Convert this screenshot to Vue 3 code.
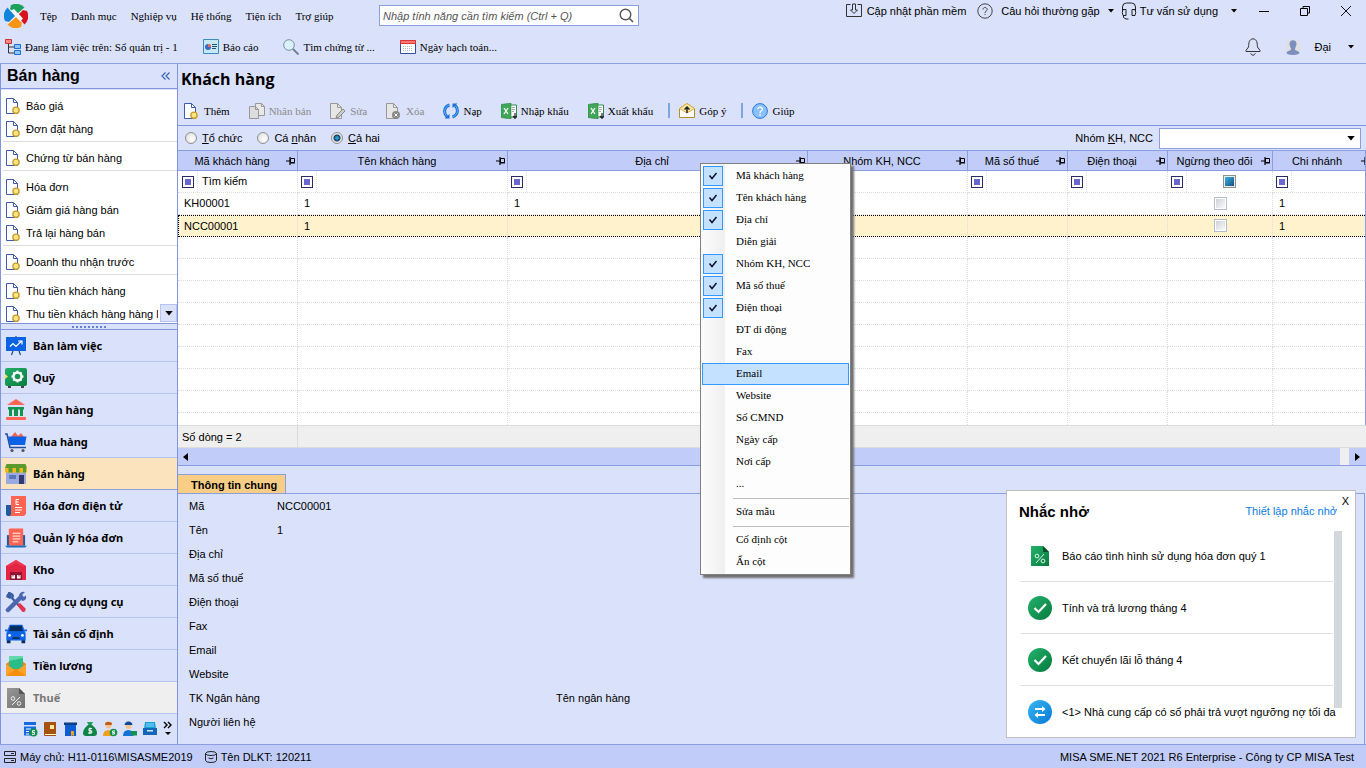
<script setup>
import { ref } from 'vue'

const menus = ['Tệp', 'Danh mục', 'Nghiệp vụ', 'Hệ thống', 'Tiện ích', 'Trợ giúp']
const shortcuts = [
  { icon: 'tree', label: 'Đang làm việc trên: Sổ quản trị - 1' },
  { icon: 'report', label: 'Báo cáo' },
  { icon: 'lens', label: 'Tìm chứng từ ...' },
  { icon: 'calendar', label: 'Ngày hạch toán...' }
]
const groups = [
  ['Báo giá', 'Đơn đặt hàng'],
  ['Chứng từ bán hàng'],
  ['Hóa đơn', 'Giảm giá hàng bán', 'Trả lại hàng bán'],
  ['Doanh thu nhận trước'],
  ['Thu tiền khách hàng', 'Thu tiền khách hàng hàng loạt']
]
const modules = [
  { icon: 'board', label: 'Bàn làm việc' },
  { icon: 'safe', label: 'Quỹ' },
  { icon: 'bank', label: 'Ngân hàng' },
  { icon: 'cart', label: 'Mua hàng' },
  { icon: 'shop', label: 'Bán hàng', state: 'active' },
  { icon: 'einvoice', label: 'Hóa đơn điện tử' },
  { icon: 'laptop', label: 'Quản lý hóa đơn' },
  { icon: 'barn', label: 'Kho' },
  { icon: 'tools', label: 'Công cụ dụng cụ' },
  { icon: 'car', label: 'Tài sản cố định' },
  { icon: 'wages', label: 'Tiền lương' },
  { icon: 'tax', label: 'Thuế', state: 'muted' }
]
const minis = [
  { icon: 'm-calc', label: 'Giá thành' },
  { icon: 'm-book', label: 'Tổng hợp' },
  { icon: 'm-contract', label: 'Hợp đồng' },
  { icon: 'm-bag', label: 'Ngân sách' },
  { icon: 'm-customer', label: 'Khách hàng' },
  { icon: 'm-staff', label: 'Nhân viên' },
  { icon: 'm-drawer', label: 'Tài liệu' }
]
const actions = [
  { icon: 'newdoc', label: 'Thêm' },
  { icon: 'copydoc', label: 'Nhân bản', off: true },
  { icon: 'editdoc', label: 'Sửa', off: true },
  { icon: 'deldoc', label: 'Xóa', off: true },
  { icon: 'reload', label: 'Nạp' },
  { icon: 'excel', label: 'Nhập khẩu' },
  { icon: 'excel', label: 'Xuất khẩu' },
  { icon: 'feedback', label: 'Góp ý', sep: true },
  { icon: 'help', label: 'Giúp', sep: true }
]
const kind = ref('all')
const kinds = [
  { id: 'org', pre: '', key: 'T', post: 'ổ chức' },
  { id: 'person', pre: 'Cá ', key: 'n', post: 'hân' },
  { id: 'all', pre: '', key: 'C', post: 'ả hai' }
]
const columns = [
  { label: 'Mã khách hàng', cls: 'c-code' },
  { label: 'Tên khách hàng', cls: 'c-name' },
  { label: 'Địa chỉ', cls: 'c-addr' },
  { label: 'Nhóm KH, NCC', cls: 'c-group' },
  { label: 'Mã số thuế', cls: 'c-tax' },
  { label: 'Điện thoại', cls: 'c-phone' },
  { label: 'Ngừng theo dõi', cls: 'c-stop' },
  { label: 'Chi nhánh', cls: 'c-branch' }
]
const rows = [
  ['KH00001', '1', '1', '', '', '', null, '1'],
  ['NCC00001', '1', '', '', '', '', null, '1']
]
const fields = [
  { label: 'Mã', value: 'NCC00001' },
  { label: 'Tên', value: '1' },
  { label: 'Địa chỉ' },
  { label: 'Mã số thuế' },
  { label: 'Điện thoại' },
  { label: 'Fax' },
  { label: 'Email' },
  { label: 'Website' },
  { label: 'TK Ngân hàng', second: 'Tên ngân hàng' },
  { label: 'Người liên hệ' }
]
const columnMenu = [
  { label: 'Mã khách hàng', on: true },
  { label: 'Tên khách hàng', on: true },
  { label: 'Địa chỉ', on: true },
  { label: 'Diễn giải' },
  { label: 'Nhóm KH, NCC', on: true },
  { label: 'Mã số thuế', on: true },
  { label: 'Điện thoại', on: true },
  { label: 'ĐT di động' },
  { label: 'Fax' },
  { label: 'Email', hover: true },
  { label: 'Website' },
  { label: 'Số CMND' },
  { label: 'Ngày cấp' },
  { label: 'Nơi cấp' },
  { label: '...' },
  { label: 'Sửa mẫu', sep: true },
  { label: 'Cố định cột', sep: true },
  { label: 'Ẩn cột' }
]
const reminders = [
  { icon: 'r-report', label: 'Báo cáo tình hình sử dụng hóa đơn quý 1' },
  { icon: 'r-check', label: 'Tính và trả lương tháng 4' },
  { icon: 'r-check', label: 'Kết chuyển lãi lỗ tháng 4' },
  { icon: 'r-swap', label: '<1> Nhà cung cấp có số phải trả vượt ngưỡng nợ tối đa' }
]
</script>

<template>
  <div class="app">
    <svg class="sprite" aria-hidden="true">
      <defs>
        <linearGradient id="g-green" x1="0" y1="0" x2="1" y2="1"><stop offset="0" stop-color="#23b26b" /><stop offset="1" stop-color="#087a3e" /></linearGradient>
        <linearGradient id="g-blue" x1="0" y1="0" x2="1" y2="1"><stop offset="0" stop-color="#35b8f2" /><stop offset="1" stop-color="#0a78d6" /></linearGradient>
        <linearGradient id="g-gray" x1="0" y1="0" x2="1" y2="1"><stop offset="0" stop-color="#989898" /><stop offset="1" stop-color="#707070" /></linearGradient>
      </defs>
      <symbol id="logo" viewBox="0 0 24 24">
        <circle cx="12" cy="12" r="10.500" fill="#f4f7ff" />
        <path d="M7 1A12 12 0 0 1 20.500 3.500L12 11 6 5z" fill="#1ba15c" />
        <path d="M7 1A12 12 0 0 1 20.500 3.500L12 11 6 5z" fill="#d9121c" transform="rotate(90 12 12)" />
        <path d="M7 1A12 12 0 0 1 20.500 3.500L12 11 6 5z" fill="#fb9314" transform="rotate(180 12 12)" />
        <path d="M7 1A12 12 0 0 1 20.500 3.500L12 11 6 5z" fill="#0f86dc" transform="rotate(270 12 12)" />
        <path d="m7 6.500 3-1.500 9 9.500-2.500 3z" fill="#f4f7ff" />
      </symbol>
      <symbol id="tree" viewBox="0 0 16 16"><path d="M3.500 5v9H9M3.500 8H9" fill="none" stroke="#333" /><path d="M.5.500h6v4h-6z" fill="#f88" stroke="#c33" /><path d="M9.500 5.500h6v4h-6zM9.500 11.500h6v4h-6z" fill="#8cc6ff" stroke="#1b6fd0" /></symbol>
      <symbol id="report" viewBox="0 0 16 16"><path d="M.5.500h15v14H.5z" fill="#c6e8fb" stroke="#3d8bb8" /><circle cx="5" cy="8" r="3" fill="#3a69c4" /><path d="M5 8V5a3 3 0 0 1 3 3z" fill="#e66" /><path d="M9 5.500h5M9 7.500h5M9 9.500h4" stroke="#256" /></symbol>
      <symbol id="lens" viewBox="0 0 16 16"><circle cx="6" cy="6" r="5.300" fill="#d8f3fd" stroke="#7c8fa0" /><path d="m10 10 5.500 5.500" stroke="#6c7d92" stroke-width="1.800" /></symbol>
      <symbol id="calendar" viewBox="0 0 16 14"><path d="M.5.500h15v13H.5z" fill="#fff" stroke="#2f4f9e" /><path d="M.5.500h15v3H.5z" fill="#f77" stroke="#d33" /><path d="M3 6.500h10M3 8.500h10M3 10.500h10" stroke="#b4bcc4" stroke-dasharray="1 1" /></symbol>
      <symbol id="glass" viewBox="0 0 15 15"><circle cx="6.500" cy="6.500" r="5.300" fill="none" stroke="#555" stroke-width="1.400" /><path d="m10.500 10.500 3.500 3.500" stroke="#555" stroke-width="1.600" /></symbol>
      <symbol id="update" viewBox="0 0 16 16"><path d="M4.500 1.500h-4v12h15v-12h-4" fill="none" stroke="#333" /><path d="M6.500 1v6h-2L8 10.500 11.500 7h-2V1z" fill="none" stroke="#333" /></symbol>
      <symbol id="question" viewBox="0 0 16 16"><circle cx="8" cy="8" r="7.200" fill="none" stroke="#444" /><path d="M6 6.500c0-2.800 4.200-2.500 4.200 0C10.200 8 8 8 8 10" fill="none" stroke="#444" /><path d="M7.500 11h1v1h-1z" fill="#444" /></symbol>
      <symbol id="headset" viewBox="0 0 16 18"><path d="M1.500 9V5q0-4 4-4h5q4 0 4 4v4M2 7.500h3v6H2q-1.500-3 0-6zM11 7.500h3q1.500 3 0 6h-3zM2.500 14v1.500L5 17h2.500" fill="none" stroke="#222" /></symbol>
      <symbol id="caret" viewBox="0 0 6 4"><path d="M0 0h6L3 3.500z" fill="#000" /></symbol>
      <symbol id="win-min" viewBox="0 0 12 12"><path d="M1 6.500h10" stroke="#000" /></symbol>
      <symbol id="win-max" viewBox="0 0 12 12"><path d="M1.500 3.500h7v7h-7zM4 3.500v-2h6.500V8H9" fill="none" stroke="#000" /></symbol>
      <symbol id="win-close" viewBox="0 0 12 12"><path d="m1 1 10 10M11 1 1 11" stroke="#111" /></symbol>
      <symbol id="bell" viewBox="0 0 16 18"><path d="M8 .8C3.500 1.500 4 5 3.500 9L1 12.500v1h14v-1L12.500 9C12 5 12.500 1.500 8 .8zM5.500 15.500 8 17.500l2.500-2" fill="none" stroke="#333" /></symbol>
      <symbol id="avatar" viewBox="0 0 16 16"><circle cx="8" cy="8" r="8" fill="#dfe0e4" /><path d="M4.500 4.500c0-4.500 7-4.500 7 0 0 2.500-1.200 3.500-1.500 5.500 0 2 4.500 1.500 4.500 4.500Q8 17.500 1.500 14.500c0-3 4.500-2.500 4.500-4.500-.3-2-1.500-3-1.500-5.500z" fill="#7d8fbd" /></symbol>
      <symbol id="newdoc" viewBox="0 0 16 16"><path d="M.5.500h7l4 4v11H.5z" fill="#fff" stroke="#3f5aa8" /><path d="M7.500.500v4h4" fill="none" stroke="#3f5aa8" /><circle cx="10" cy="12.200" r="3.100" fill="#ffe680" stroke="#c89a28" stroke-width="1.300" /></symbol>
      <symbol id="copydoc" viewBox="0 0 16 16"><path d="M6.500.500h6l3 3v9h-9z" fill="#e8e8e8" stroke="#999" /><path d="M.5 3.500h6l3 3v9h-9z" fill="#ddd" stroke="#999" /><path d="M6.500 3.500v3h3M12.500.500v3h3" fill="none" stroke="#999" /></symbol>
      <symbol id="editdoc" viewBox="0 0 16 16"><path d="M.5.500h7l4 4v11H.5z" fill="#e6e6e6" stroke="#999" /><path d="M7.500.500v4h4" fill="none" stroke="#999" /><path d="m6 15 1-3 6-6 2 2-6 6z" fill="#ccc" stroke="#8b8b8b" /></symbol>
      <symbol id="deldoc" viewBox="0 0 16 16"><path d="M.5.500h7l4 4v11H.5z" fill="#e6e6e6" stroke="#999" /><path d="M7.500.500v4h4" fill="none" stroke="#999" /><circle cx="10" cy="12" r="4" fill="#888" /><path d="m8.500 10.500 3 3M11.500 10.500l-3 3" stroke="#fff" /></symbol>
      <symbol id="reload" viewBox="0 0 16 16"><path d="M6.500 2C.5 4 .5 10.500 4 13.500M9.500 14C15.500 12 15.500 5.500 12 2.500" fill="none" stroke="#1b6fd6" stroke-width="3" /><path d="M6.500 2C.5 4 .5 10.500 4 13.500M9.500 14C15.500 12 15.500 5.500 12 2.500" fill="none" stroke="#65b4ff" stroke-width="1" /><path d="M1.500 15.500h5V11zM14.500.500h-5V5z" fill="#1b6fd6" /></symbol>
      <symbol id="excel" viewBox="0 0 16 16"><path d="M8 2h7.500v12H8z" fill="#fff" stroke="#2e8c46" /><path d="M11 4.500h3M11 6.500h3M11 8.500h2" stroke="#aaa" /><path d="M0 1.500 10 0v16L0 14.500z" fill="#3fa757" stroke="#2a7c3e" stroke-width=".6" /><path d="m3 5 4 6M7 5l-4 6" stroke="#fff" stroke-width="1.300" /><path d="M14 10v5M12 13l2 2.300 2-2.300" fill="none" stroke="#222" stroke-width="1.200" /></symbol>
      <symbol id="feedback" viewBox="0 0 16 16"><path d="m.5 5.500 7.500-5 7.500 5v9H.5z" fill="#fff" stroke="#b98a26" /><path d="m.5 5.500 7.500-5 7.500 5L8 10z" fill="#fbe7a0" stroke="#d8b04a" /><path d="M8 10V4.500M5.500 6.500 8 4l2.500 2.500" fill="none" stroke="#222" stroke-width="1.500" /></symbol>
      <symbol id="help" viewBox="0 0 16 16"><circle cx="8" cy="8" r="7.400" fill="#8ac1fb" stroke="#2d77d2" /><path d="M5.800 6.300c0-3 4.600-2.800 4.600 0C10.400 8 8 8 8 10" fill="none" stroke="#fff" stroke-width="1.300" /><path d="M7.300 11.300h1.500v1.500H7.300z" fill="#fff" /></symbol>
      <symbol id="fold" viewBox="0 0 10 8"><path d="M4.500.500 1 4l3.500 3.500M8.500.500 5 4l3.500 3.500" fill="none" stroke="#3d63b5" stroke-width="1.200" /></symbol>
      <symbol id="pin" viewBox="0 0 10 8"><path d="M0 4h4M4 0v8" stroke="#000" fill="none" stroke-width="1.200" /><path d="M4.500 1.500h4v4h-4z" fill="none" stroke="#000" /><path d="M4 6h5" stroke="#000" /></symbol>
      <symbol id="tick" viewBox="0 0 10 10"><path d="m1.500 4.500 2.500 3L8.500 2" fill="none" stroke="#101030" stroke-width="1.500" /></symbol>

      <symbol id="board" viewBox="0 0 22 22"><path d="M8 16 6.500 20M14 16l1.500 4M11 1v2" stroke="#1c4b7c" stroke-width="1.200" /><path d="M1 2h20v14H1z" fill="#0b62e4" /><path d="m5 11.500 3-3 3 3L16.500 6M13 6h4v3.500" fill="none" stroke="#fff" stroke-width="1.200" /></symbol>
      <symbol id="safe" viewBox="0 0 22 22"><path d="M3 18h3v3H3zM16 18h3v3h-3z" fill="#444" /><rect y="1" width="22" height="18" rx="2" fill="url(#g-green)" /><circle cx="12.500" cy="9.500" r="4" fill="none" stroke="#fff" stroke-width="2.400" /><path d="M12.500 3.500v2M12.500 13.500v2M6.500 9.500h2M16.500 9.500h2M8.400 5.400l1.200 1.200M15.400 12.400l1.200 1.200M16.600 5.400l-1.200 1.200M8.400 13.600l1.200-1.200" stroke="#fff" stroke-width="1.800" /><path d="m0 7 3 2.500L0 12z" fill="#f9e547" /></symbol>
      <symbol id="bank" viewBox="0 0 22 22"><path d="m11 0 9 6H2z" fill="#ff6352" /><path d="M3 8h16v2.500h-1V17h-3v-6.500h-2V17H9v-6.500H7V17H4v-6.500H3z" fill="#12944d" /><rect x="1" y="18" width="20" height="3" rx="1" fill="#ff6352" /></symbol>
      <symbol id="cart" viewBox="0 0 22 22"><path d="m6 6 4-5 4 5zM12 6l4-4 3 4z" fill="#f26552" /><path d="M0 3h2l3 13.500h16" fill="none" stroke="#1f4e9d" stroke-width="1.500" /><path d="M3 5.500h18.500L20 14H5z" fill="#0b62e4" /><circle cx="7" cy="19.500" r="1.600" fill="#555" /><circle cx="18" cy="19.500" r="1.600" fill="#555" /></symbol>
      <symbol id="shop" viewBox="0 0 22 22"><path d="M1 8h20v13H1z" fill="#9aa9df" /><path d="M14 12h5v9h-5z" fill="#353a6b" /><path d="M4 12h7v4H4z" fill="#5c74bb" /><path d="M0 5h22v4q-2 2-4 0-2 2-3.500 0-2 2-3.500 0-2 2-4 0-2 2-3.500 0-2 2-3.500 0z" fill="#f6b71c" /><path d="M3.500 4.500h4v5h-4zM11 4.500h3.500v5H11zM18 4.500h3v5h-3z" fill="#5b9b2e" /><path d="M1.500 1h19L22 5H0z" fill="#5b9b2e" /></symbol>
      <symbol id="einvoice" viewBox="0 0 22 22"><path d="M1 10h5v11H3q-2 0-2-2z" fill="#1d5c9e" /><path d="M6 1h15v18l-2 2H4q2 0 2-2z" fill="#ff6352" /><path d="M14 4.500h-3v5h3M11 7h2.500M10 12.500h7M10 15h7M10 17.500h5" fill="none" stroke="#fff" /></symbol>
      <symbol id="laptop" viewBox="0 0 23 22"><path d="M2 8h19v11H2z" fill="#1d5c9e" /><path d="M4 2q0-1 2-1h13v18H6q-2 0-2-2z" fill="#ff6352" /><path d="M8 6h8M8 9h8M8 12h8M8 15h6" stroke="#fff" /><path d="M0 19h23l-2 2H2z" fill="#1672c2" /></symbol>
      <symbol id="barn" viewBox="0 0 22 22"><path d="m11 1 10 6v14H1V7z" fill="#e42644" /><path d="m11 1 10 6-3 .5-7-3.500-7 3.500L1 7z" fill="#f0364f" /><path d="M5 13h12v8H5z" fill="#901230" /><path d="M6.500 16h3.500v3.500H6.500zM12 16h3.500v3.500H12z" fill="#fff" /><path d="M8 15.500v2M14 15.500v2" stroke="#901230" /></symbol>
      <symbol id="tools" viewBox="0 0 22 22"><path d="M3 2q4 0 5 3l-1 2 11 12" fill="none" stroke="#3a5ba0" stroke-width="2.200" /><path d="M2 3 5 1l2 5-2 2-4-2z" fill="#3a5ba0" /><path d="m12 14 3-2 5.500 5.500q.5 4-3 3.500z" fill="#df3550" /><path d="M3 19 16 6" stroke="#4a67b0" stroke-width="4.500" stroke-linecap="round" /><path d="M14 4q2-4 6-3l-3 3 1.500 2L21 4.500q1 5-4 5.500z" fill="#4a67b0" /></symbol>
      <symbol id="car" viewBox="0 0 24 22"><path d="M5 1h14l3 8H2z" fill="#0b62e4" /><path d="M6 2h12l1.500 6h-15z" fill="#082d5c" /><path d="M0 6h3v2H0zM21 6h3v2h-3z" fill="#0b62e4" /><path d="M2 17h4v4H2zM18 17h4v4h-4z" fill="#082d5c" /><path d="M1.500 10q.5-2 3-2h15q2.500 0 3 2v8h-21z" fill="#0b62e4" /><circle cx="5" cy="12.500" r="1.500" fill="#fff" /><circle cx="19" cy="12.500" r="1.500" fill="#fff" /><path d="M8 15.500h8" stroke="#082d5c" stroke-width="2" /></symbol>
      <symbol id="wages" viewBox="0 0 22 22"><path d="m1 9 5-4h10l5 4v12H1z" fill="#e98a12" /><path d="M4 1h14v13H4z" fill="#2bbd88" /><path d="M4 1h14v2L4 6z" fill="#63d7ad" /><path d="m1 9 10 7 10-7v12H1z" fill="#ffa12a" /><path d="m1 21 10-7 10 7z" fill="#f58f0c" /></symbol>
      <symbol id="tax" viewBox="0 0 22 22"><path d="M2 1h12l6 6v14H2z" fill="url(#g-gray)" /><path d="M14 1v6h6z" fill="#555" /><path d="m7 18 8-8" stroke="#eee" /><circle cx="8" cy="11.500" r="1.800" fill="none" stroke="#eee" /><circle cx="14" cy="16.500" r="1.800" fill="none" stroke="#eee" /></symbol>

      <symbol id="m-calc" viewBox="0 0 16 16"><path d="M2 1h12v3H2zM2 5.500h12v9H2z" fill="#1769e0" /><path d="M4 8h5M4 10.500h3M4 13h3" stroke="#fff" stroke-width="1.200" /><circle cx="11.500" cy="11.500" r="4" fill="#12934d" /><path d="M13 9.700h-2.500v1.800h2v1.800H10" fill="none" stroke="#fff" /></symbol>
      <symbol id="m-book" viewBox="0 0 16 16"><path d="M2 2q0-1 1-1h11v12H4q-1 0-1 1h11v1H3q-1 0-1-1z" fill="#a6520d" /><path d="M8 4h4v4H8z" fill="#ffe7a8" /><path d="M3 13.500h11" stroke="#ffd" /></symbol>
      <symbol id="m-contract" viewBox="0 0 16 16"><path d="M3 3h11v12H3z" fill="#0b5bd3" /><path d="M2 1.500h13V4H2z" fill="#083e85" /><path d="M9 10h3v5.500L10.500 14 9 15.500z" fill="#f3a31b" /></symbol>
      <symbol id="m-bag" viewBox="0 0 16 16"><path d="M5 1h6l-1.500 3h-3z" fill="#1fa05a" /><path d="M6 4h4q5 4 5 8 0 3-3 3H4q-3 0-3-3 0-4 5-8z" fill="#108446" /><path d="M10 7.500H7v2.300h2.700V12H6M8 6.500V13" fill="none" stroke="#fff" /></symbol>
      <symbol id="m-customer" viewBox="0 0 16 16"><circle cx="6.500" cy="4.500" r="3" fill="#f8c48e" /><path d="M3 4q0-4 5-3 3 1 1.500 3z" fill="#c45b18" /><path d="M1 15q0-6 5.500-6 5 0 5 6z" fill="#f3a01d" /><circle cx="11.500" cy="11.500" r="3.800" fill="#12934d" /><path d="M13 10h-2.500v1.500h2V13H10" fill="none" stroke="#fff" /></symbol>
      <symbol id="m-staff" viewBox="0 0 16 16"><circle cx="6.500" cy="5" r="3" fill="#f8c48e" /><path d="M2.500 4q.5-3.500 4-3.500t4 3.500z" fill="#0c4a96" /><path d="M1 15q0-6 5.500-6 5 0 5 6z" fill="#1572d8" /><path d="M9 10h6v4.500H9z" fill="#12934d" /></symbol>
      <symbol id="m-drawer" viewBox="0 0 16 16"><path d="M3 1h10l1 7H2z" fill="#19a0dc" /><path d="M4 3h8M4 5h8" stroke="#8ed7f5" /><path d="M1 7h14v7H1z" fill="#1467b6" /><path d="M5 9h6v1.500H5z" fill="#cdeafc" /></symbol>
      <symbol id="m-more" viewBox="0 0 10 16"><path d="m1 1 3 3-3 3M5 1l3 3-3 3" fill="none" stroke="#000" stroke-width="1.400" /><path d="M2 11h6l-3 3z" fill="#000" /></symbol>

      <symbol id="r-report" viewBox="0 0 24 24"><path d="M3 2h12l6 6v14H3z" fill="url(#g-green)" /><path d="M15 2v6h6z" fill="#064f2a" /><path d="m8 19 8-9" stroke="#d8f5e5" /><circle cx="9" cy="12" r="1.900" fill="none" stroke="#d8f5e5" /><circle cx="15" cy="17" r="1.900" fill="none" stroke="#d8f5e5" /></symbol>
      <symbol id="r-check" viewBox="0 0 24 24"><circle cx="12" cy="12" r="12" fill="url(#g-green)" /><path d="m6.500 12 4 4 7.500-8" fill="none" stroke="#fff" stroke-width="2.200" /></symbol>
      <symbol id="r-swap" viewBox="0 0 24 24"><circle cx="12" cy="12" r="12" fill="url(#g-blue)" /><path d="M7 9h8M9 15h8" stroke="#fff" stroke-width="1.800" /><path d="m14 6 3.500 3-3.500 3zM10 12l-3.500 3 3.500 3z" fill="#fff" /></symbol>
      <symbol id="server" viewBox="0 0 12 12"><path d="M.5.500h11v4H.5zM.5 7.500h11v4H.5zM7 2.500h3M7 9.500h3" fill="none" stroke="#222" /></symbol>
      <symbol id="database" viewBox="0 0 12 12"><path d="M.5 2.500Q1 .5 6 .5t5.500 2Q11 4.500 6 4.500T.5 2.500v7q.5 2 5.500 2t5.500-2v-7M3.500 7q2.500 1.500 5 0" fill="none" stroke="#222" /></symbol>
    </svg>

    <header class="top">
      <div class="menubar">
        <svg class="logo"><use href="#logo" /></svg>
        <nav class="menus">
          <button v-for="m in menus" :key="m" type="button" class="serif">{{ m }}</button>
        </nav>
        <label class="search">
          <input type="text" aria-label="Tìm kiếm tính năng" placeholder="Nhập tính năng cần tìm kiếm (Ctrl + Q)" />
          <svg class="i15"><use href="#glass" /></svg>
        </label>
        <div class="support">
          <button type="button" class="link"><svg class="i16"><use href="#update" /></svg>Cập nhật phần mềm</button>
          <button type="button" class="link faq"><svg class="i16"><use href="#question" /></svg>Câu hỏi thường gặp<svg class="caret"><use href="#caret" /></svg></button>
          <button type="button" class="link talk"><svg class="i18"><use href="#headset" /></svg>Tư vấn sử dụng<svg class="caret"><use href="#caret" /></svg></button>
          <div class="window">
            <button type="button" aria-label="Thu nhỏ"><svg class="i12"><use href="#win-min" /></svg></button>
            <button type="button" aria-label="Khôi phục"><svg class="i12"><use href="#win-max" /></svg></button>
            <button type="button" aria-label="Đóng"><svg class="i12"><use href="#win-close" /></svg></button>
          </div>
        </div>
      </div>
      <div class="shortcuts">
        <button v-for="s in shortcuts" :key="s.label" type="button" class="serif"><svg class="i16"><use :href="'#' + s.icon" /></svg>{{ s.label }}</button>
        <div class="account">
          <button type="button" aria-label="Thông báo"><svg class="i18"><use href="#bell" /></svg></button>
          <button type="button" class="user"><svg class="i16"><use href="#avatar" /></svg>Đại<svg class="caret"><use href="#caret" /></svg></button>
        </div>
      </div>
    </header>

    <div class="body">
      <aside class="side">
        <div class="side-head"><h2>Bán hàng</h2><button type="button" aria-label="Thu gọn"><svg class="fold"><use href="#fold" /></svg></button></div>
        <div class="tasks">
          <div v-for="(g, i) in groups" :key="i" class="group">
            <a v-for="t in g" :key="t" href="#"><svg class="i16"><use href="#newdoc" /></svg>{{ t }}</a>
          </div>
          <button type="button" class="scroll-down" aria-label="Cuộn xuống"><svg class="caret-lg"><use href="#caret" /></svg></button>
        </div>
        <div class="grip"><i></i></div>
        <nav class="modules">
          <button v-for="m in modules" :key="m.label" type="button" :class="m.state"><svg><use :href="'#' + m.icon" /></svg>{{ m.label }}</button>
        </nav>
        <div class="minis">
          <button v-for="m in minis" :key="m.icon" type="button" :aria-label="m.label"><svg class="i16"><use :href="'#' + m.icon" /></svg></button>
          <button type="button" aria-label="Thêm mục"><svg class="more"><use href="#m-more" /></svg></button>
        </div>
      </aside>

      <main class="content">
        <h1>Khách hàng</h1>
        <div class="toolbar">
          <template v-for="a in actions" :key="a.label">
            <i v-if="a.sep" class="bar"></i>
            <button type="button" class="serif" :class="{ off: a.off }" :disabled="a.off"><svg class="i16"><use :href="'#' + a.icon" /></svg>{{ a.label }}</button>
          </template>
        </div>
        <div class="filters">
          <label v-for="k in kinds" :key="k.id"><input v-model="kind" type="radio" name="kind" :value="k.id" /><span>{{ k.pre }}<u>{{ k.key }}</u>{{ k.post }}</span></label>
          <label class="grp" for="grp">Nhóm <u>K</u>H, NCC</label>
          <span class="select"><select id="grp"><option></option></select><svg class="caret-lg"><use href="#caret" /></svg></span>
        </div>

        <div class="grid">
          <table>
            <thead>
              <tr>
                <th v-for="c in columns" :key="c.label" :class="c.cls" scope="col"><span class="th"><span>{{ c.label }}</span><svg><use href="#pin" /></svg></span></th>
              </tr>
            </thead>
            <tbody>
              <tr class="search-row">
                <td v-for="(c, i) in columns" :key="c.label">
                  <span class="fcell"><span class="op"><i></i></span><span v-if="i === 0" class="hint">Tìm kiếm</span><span v-if="i === 6" class="mid"><input type="checkbox" class="mixed" aria-label="Lọc ngừng theo dõi" /></span></span>
                </td>
              </tr>
              <tr v-for="r in rows" :key="r[0]" :class="{ sel: r[0] === 'NCC00001' }">
                <td v-for="(v, i) in r" :key="i"><input v-if="v === null" type="checkbox" :aria-label="'Ngừng theo dõi ' + r[0]" /><template v-else>{{ v }}</template></td>
              </tr>
              <tr v-for="n in 9" :key="'e' + n"><td v-for="c in columns" :key="c.label"></td></tr>
            </tbody>
          </table>
        </div>
        <div class="count"><span>Số dòng = 2</span></div>
        <div class="hscroll"><svg class="left" viewBox="0 0 5 8"><path d="M5 0v8L0 4z" /></svg><i></i><svg viewBox="0 0 5 8"><path d="M0 0v8l5-4z" /></svg></div>

        <section class="detail">
          <button type="button" class="tab">Thông tin chung</button>
          <dl>
            <div v-for="f in fields" :key="f.label"><dt>{{ f.label }}</dt><dd>{{ f.value }}</dd><dt v-if="f.second">{{ f.second }}</dt></div>
          </dl>
        </section>
      </main>
    </div>

    <footer class="status">
      <svg class="i12"><use href="#server" /></svg><span>Máy chủ: H11-0116\MISASME2019</span>
      <svg class="i12 db"><use href="#database" /></svg><span>Tên DLKT: 120211</span>
      <span class="edition">MISA SME.NET 2021 R6 Enterprise - Công ty CP MISA Test</span>
    </footer>

    <section class="reminder">
      <button type="button" class="close">X</button>
      <div class="r-head"><h3>Nhắc nhở</h3><a href="#">Thiết lập nhắc nhở</a></div>
      <div class="r-body">
        <ul>
          <li v-for="r in reminders" :key="r.label"><svg><use :href="'#' + r.icon" /></svg><span>{{ r.label }}</span></li>
        </ul>
        <i class="thumb"></i>
      </div>
    </section>

    <div class="context" role="menu">
      <template v-for="c in columnMenu" :key="c.label">
        <hr v-if="c.sep" />
        <button type="button" role="menuitem" class="serif" :class="{ hover: c.hover }"><span class="box" :class="{ on: c.on }"><svg v-if="c.on"><use href="#tick" /></svg></span><span class="name">{{ c.label }}</span></button>
      </template>
    </div>
  </div>
</template>

<style>
body { margin: 0; }
</style>

<style scoped>
.app { position: relative; display: flex; flex-direction: column; height: 100vh; overflow: hidden; background: #dae1fb; color: #000; font: 11px/16px "Liberation Sans", Arial, sans-serif; white-space: nowrap; }
.app *, .app *::before, .app *::after { box-sizing: border-box; }
.sprite { position: absolute; width: 0; height: 0; }
button { padding: 0; border: 0; background: none; color: inherit; font: inherit; display: flex; align-items: center; }
svg { display: block; flex: none; }
i { font-style: normal; }
h1, h2, h3, dl, dd, ul { margin: 0; padding: 0; }
.serif { font-family: "Liberation Serif", "Times New Roman", serif; }
.i12 { width: 12px; height: 12px; }
.i15 { width: 15px; height: 15px; }
.i16 { width: 16px; height: 16px; }
.i18 { width: 16px; height: 18px; }
.caret { width: 6px; height: 4px; }
.caret-lg { width: 8px; height: 5px; }

.top { flex: none; border-bottom: 1px solid #8b9fe0; }
.menubar { display: flex; height: 31px; padding-left: 4px; align-items: center; }
.logo { width: 24px; height: 24px; }
.menus { display: flex; gap: 14px; width: 339px; margin-left: 12px; }
.search { display: flex; align-items: center; width: 260px; height: 21px; padding: 0 4px 0 3px; border: 1px solid #8b9fe0; background: #fff; }
.search input { flex: 1; min-width: 0; padding: 0; border: 0; outline: 0; background: none; font: italic 11px/16px "Liberation Sans", Arial, sans-serif; }
.search input::placeholder { color: #555; }
.support { display: flex; align-items: center; margin: 3px 14px 0 auto; height: 16px; align-self: flex-start; }
.link { gap: 5px; }
.faq { margin-left: 11px; gap: 8px; }
.talk { margin-left: 7px; gap: 3px; }
.talk .caret { margin-left: 10px; }
.window { display: flex; gap: 29px; margin-left: 21px; }
.shortcuts { display: flex; align-items: center; height: 32px; padding: 0 12px 0 5px; gap: 25px; }
.shortcuts button { gap: 4px; }
.account { display: flex; align-items: center; gap: 24px; margin-left: auto; }
.account .user { gap: 13px; }
.user .caret { margin-left: 4px; }

.body { flex: 1; display: flex; min-height: 0; border-bottom: 1px solid #8b9fe0; }
.side { flex: none; display: flex; flex-direction: column; width: 178px; border: solid #8095dc; border-width: 0 1px; }
.side-head { flex: none; display: flex; align-items: center; justify-content: space-between; height: 25px; padding: 0 6px; border-bottom: 1px solid #8095dc; }
.side-head h2 { font-size: 16px; line-height: 24px; }
.fold { width: 10px; height: 8px; }
.tasks { position: relative; flex: 1; min-height: 0; overflow: hidden; background: #fff; border-top: 1px solid #dae1fb; }
.group { margin-left: 2px; padding: 4px 0 1px; border-bottom: 1px solid #dcdcdc; }
.group a { display: flex; align-items: center; gap: 4px; height: 23px; margin-right: 19px; padding-left: 3px; overflow: hidden; color: #000; text-decoration: none; }
.scroll-down { position: absolute; right: 0; bottom: 1px; width: 17px; height: 18px; justify-content: center; border: 1px solid #b7c4f0; background: #dae1fb; }
.grip { flex: none; display: flex; justify-content: center; height: 7px; padding-top: 2px; border: solid #8095dc; border-width: 1px 0; }
.grip i { width: 35px; height: 2px; background: repeating-linear-gradient(90deg, #6483d2 0 2px, transparent 2px 4px); }
.modules { flex: none; }
.modules button { width: 100%; height: 32px; gap: 6px; padding-left: 4px; border-bottom: 1px solid #b4c2f0; font: bold 11px/16px "Noto Sans", "Open Sans", sans-serif; }
.modules svg { width: 22px; height: 22px; }
.modules .active { background: #fbe4bd; border-color: #8b9fe0; }
.modules .muted { background: #efefef; color: #777; }
.minis { flex: none; display: flex; align-items: center; gap: 4px; height: 30px; padding-left: 21px; }
.more { width: 10px; height: 16px; margin-left: 1px; }

.content { flex: 1; display: flex; flex-direction: column; min-width: 0; }
h1 { flex: none; padding-left: 3px; font: bold 16px/30px "Open Sans", "Noto Sans", sans-serif; }
.toolbar { flex: none; display: flex; align-items: center; gap: 19px; height: 32px; padding: 2px 0 0 6px; border-bottom: 1px solid #8095dc; }
.toolbar button { gap: 4px; }
.toolbar .off { color: #8a8a8a; }
.bar { width: 2px; height: 15px; margin: 0 -10px 0 -4px; background: #7fa7dd; }
.filters { flex: none; display: flex; align-items: center; gap: 15px; height: 24px; padding: 0 5px 0 7px; }
.filters label { display: flex; align-items: center; gap: 5px; white-space: pre; }
.filters input { appearance: none; width: 12px; height: 12px; margin: 0; border: 1px solid #8f8f8f; border-radius: 50%; background: radial-gradient(circle at 60% 60%, #fff, #d8d8d8); }
.filters input:checked { background: radial-gradient(circle, #2b9bd0 0 1px, #10405f 3px, #e8e8e8 4px); }
.filters .grp { margin-left: auto; gap: 0; }
.select { position: relative; width: 202px; height: 21px; margin-left: -9px; }
.select select { appearance: none; width: 100%; height: 100%; border: 1px solid #8b9fe0; border-radius: 0; background: #fff; }
.select svg { position: absolute; right: 6px; top: 8px; }

.grid { flex: 1 1 0; min-height: 0; overflow: hidden; background: #fff; border: solid #8b9fe0; border-width: 1px 1px 0 0; }
table { width: calc(100% + 8px); table-layout: fixed; border-collapse: separate; border-spacing: 0; }
th { height: 20px; padding: 0; background: #c1cdf8; border: solid #8b9fe0; border-width: 0 1px 1px 0; font-weight: normal; }
.th { display: flex; align-items: center; padding-right: 1px; }
.th span { flex: 1; text-align: center; }
.th svg { width: 10px; height: 8px; }
.c-code { width: 120px; }
.c-name { width: 210px; }
.c-group { width: 160px; }
.c-tax, .c-phone { width: 100px; }
.c-stop { width: 105px; }
.c-branch { width: 100px; }
td { height: 22px; padding: 0 6px 1px; border: dotted #dcdcdc; border-width: 0 1px 1px 0; line-height: 16px; }
.search-row td { padding: 0; }
.fcell { display: flex; height: 21px; }
.op { display: flex; align-items: center; width: 19px; padding-left: 3px; border-right: 1px dotted #dcdcdc; }
td:first-child .op { width: 20px; padding-left: 4px; }
.op i { width: 12px; height: 12px; border: 1px solid #2a2a66; background: #6a68cf; box-shadow: inset 0 0 0 2px #fff; }
.hint { padding: 2px 0 0 4px; }
.mid { flex: 1; display: flex; align-items: center; }
td input { appearance: none; display: block; width: 13px; height: 13px; margin: 0 auto; border: 1px solid #b0bdd2; background: linear-gradient(135deg, #c9ccd6, #fff); box-shadow: inset 0 0 0 1px #fff; }
td .mixed { border-color: #8e8f8f; background: linear-gradient(135deg, #3cc0e8, #14437a); box-shadow: inset 0 0 0 1px #eee; }
.sel td { padding-bottom: 1px; background: #fff2cc; border-top: 1px dotted #000; border-bottom: 1px dotted #000; }
.sel td:first-child { border-left: 1px dotted #000; padding-left: 5px; }
.count { flex: none; height: 23px; border: solid #dcdcdc; border-width: 1px 0; background: #efefef; }
.count span { display: block; width: 120px; height: 21px; padding-left: 4px; border-right: 1px solid #dcdcdc; line-height: 22px; }
.hscroll { flex: none; display: flex; align-items: center; height: 18px; padding: 0 6px 0 5px; background: #c1cdf8; border-bottom: 1px solid #8b9fe0; }
.hscroll svg { width: 5px; height: 8px; }
.hscroll i { width: 9px; height: 17px; margin: 0 6px 0 auto; background: #efefef; }

.detail { flex: none; margin-right: 1px; padding-top: 8px; }
.tab { height: 19px; width: 108px; padding: 2px 0 0 13px; border: solid #8b9fe0; border-width: 1px 1px 0 0; background: #f8cd85; font-weight: bold; }
dl { height: 251px; border: solid #8b9fe0; border-width: 1px 1px 0 0; }
dl div { display: flex; height: 24px; align-items: center; padding-left: 11px; }
dt { width: 88px; }
dd { width: 279px; }

.status { flex: none; display: flex; align-items: center; gap: 4px; height: 23px; padding: 0 12px 0 4px; background: #c1cdf8; }
.status .db { margin-left: 8px; }
.edition { margin-left: auto; }

.reminder { position: absolute; right: 10px; bottom: 30px; width: 350px; height: 248px; border: 1px solid #bfbfbf; background: #fff; }
.close { position: absolute; right: 6px; top: 2px; }
.r-head { display: flex; align-items: center; justify-content: space-between; height: 40px; padding: 0 18px 0 12px; }
.r-head h3 { font-size: 15px; line-height: 20px; padding-top: 2px; }
.r-head a { color: #0a7be0; text-decoration: none; }
.r-body { display: flex; height: 206px; padding: 0 13px 0 14px; overflow: hidden; }
.r-body ul { flex: 1; min-width: 0; list-style: none; }
.r-body li { display: flex; align-items: center; gap: 10px; height: 52px; padding-left: 7px; border-bottom: 1px solid #dedede; }
.r-body li:first-child { height: 51px; }
.r-body li:last-child { border: 0; }
.r-body li svg { width: 24px; height: 24px; }
.thumb { width: 8px; height: 177px; margin-left: 1px; background: #d4d8dd; }

.context { position: absolute; left: 700px; top: 163px; width: 151px; padding: 1px; border: 1px solid #808080; background: linear-gradient(90deg, #fcfcfc, #efefef 24px, #fdfdfd 24px); box-shadow: 3px 3px 2px #707070; }
.context button { width: 100%; height: 22px; border: 1px solid transparent; }
.context .hover { border-color: #3399ff; background: #c4e1ff; }
.name { padding-bottom: 2px; }
.box { display: flex; align-items: center; justify-content: center; width: 20px; height: 20px; margin-right: 13px; }
.box.on { border: 1px solid #3399ff; background: #c4e1ff; }
.box svg { width: 10px; height: 10px; }
.context hr { height: 1px; margin: 3px 0 2px 31px; border: 0; background: #bdbdbd; }
</style>
